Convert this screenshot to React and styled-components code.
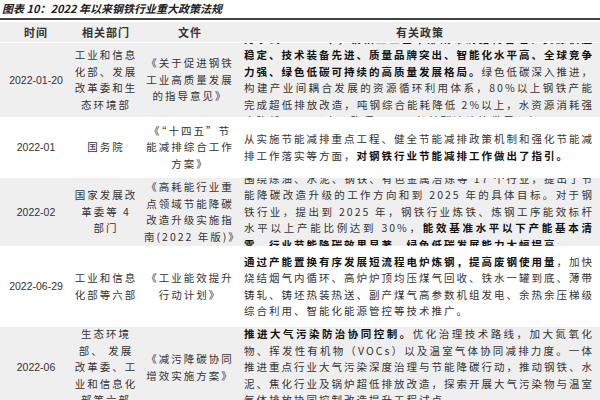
import React from "react";
import styled, { createGlobalStyle } from "styled-components";

const Global = createGlobalStyle`
  body { margin: 0; background: #fff; font-family: "Noto Sans CJK SC", "Liberation Sans", sans-serif; color: #222; }
`;

const Page = styled.div`
  width: 600px;
  height: 400px;
  overflow: hidden;
`;

const Title = styled.div`
  font-size: 11px;
  font-weight: 700;
  font-style: italic;
  padding: 0 2px;
  height: 18px;
  line-height: 16px;
  border-bottom: 2px solid #444;
  overflow: hidden;
`;

const Table = styled.div`
  display: grid;
  grid-template-columns: 72px 68px 100px 1fr;
  margin-top: 2px;
`;

const Cell = styled.div`
  background: ${(p) => (p.$shade ? "#efefef" : "#fff")};
  border-bottom: 1px solid #fff;
  display: flex;
  align-items: center;
  justify-content: ${(p) => (p.$left ? "flex-start" : "center")};
  text-align: ${(p) => (p.$left ? "justify" : "center")};
  font-size: ${(p) => (p.$head ? "11px" : "10.5px")};
  font-weight: ${(p) => (p.$head ? 700 : 400)};
  letter-spacing: ${(p) => (p.$date ? "0" : p.$head ? "1px" : "2px")};
  font-family: ${(p) => (p.$date ? '"Liberation Sans", sans-serif' : "inherit")};
  line-height: 16.5px;
  padding: ${(p) => (p.$left ? "0 6px 0 4px" : `0 ${p.$pad ?? 2}px`)};
  height: ${(p) => p.$h}px;
  box-sizing: border-box;
  color: #333;
  overflow: hidden;
`;

const Txt = styled.div`
  width: 100%;
  b { font-weight: 700; color: #111; }
`;

const rows = [
  {
    h: 75, shade: true, date: "2022-01-20", dept: "工业和信息化部、发展改革委和生态环境部",
    file: "《关于促进钢铁工业高质量发展的指导意见》",
    policy: (<><b>力争到 2025 年，钢铁工业基本形成布局结构合理、资源供应稳定、技术装备先进、质量品牌突出、智能化水平高、全球竞争力强、绿色低碳可持续的高质量发展格局。</b>绿色低碳深入推进，构建产业间耦合发展的资源循环利用体系，80%以上钢铁产能完成超低排放改造，吨钢综合能耗降低 2%以上，水资源消耗强度降低 10%以上，确保 2030 年前碳达峰等发展目标。</>),
  },
  {
    h: 60, date: "2022-01", dept: "国务院", file: "《“十四五”节能减排综合工作方案》",
    policy: (<>从实施节能减排重点工程、健全节能减排政策机制和强化节能减排工作落实等方面，<b>对钢铁行业节能减排工作做出了指引。</b></>),
  },
  {
    h: 69, shade: true, date: "2022-02", dept: "国家发展改革委等 4 部门",
    file: "《高耗能行业重点领域节能降碳改造升级实施指南(2022 年版)》",
    policy: (<>围绕炼油、水泥、钢铁、有色金属冶炼等 17 个行业，提出了节能降碳改造升级的工作方向和到 2025 年的具体目标。对于钢铁行业，提出到 2025 年，钢铁行业炼铁、炼钢工序能效标杆水平以上产能比例达到 30%，<b>能效基准水平以下产能基本清零，行业节能降碳效果显著，绿色低碳发展能力大幅提高。</b></>),
  },
  {
    h: 80, date: "2022-06-29", dept: "工业和信息化部等六部", file: "《工业能效提升行动计划》",
    policy: (<><b>通过产能置换有序发展短流程电炉炼钢，提高废钢使用量</b>，加快烧结烟气内循环、高炉炉顶均压煤气回收、铁水一罐到底、薄带铸轧、铸坯热装热送、副产煤气高参数机组发电、余热余压梯级综合利用、智能化能源管控等技术推广。</>),
  },
  {
    h: 82, shade: true, date: "2022-06", dept: "生态环境部、 发展改革委、工业和信息化部等六部",
    file: "《减污降碳协同增效实施方案》",
    policy: (<><b>推进大气污染防治协同控制。</b>优化治理技术路线，加大氮氧化物、挥发性有机物（VOCs）以及温室气体协同减排力度。一体推进重点行业大气污染深度治理与节能降碳行动，推动钢铁、水泥、焦化行业及锅炉超低排放改造，探索开展大气污染物与温室气体排放协同控制改造提升工程试点。</>),
  },
];

export default function App() {
  return (
    <Page>
      <Global />
      <Title>图表 10：2022 年以来钢铁行业重大政策法规</Title>
      <Table>
        {["时间", "相关部门", "文件", "有关政策"].map((t) => (
          <Cell key={t} $head $shade $h={21}>{t}</Cell>
        ))}
        {rows.map((r) => (
          <React.Fragment key={r.date + r.file}>
            <Cell $shade={r.shade} $date $h={r.h}>{r.date}</Cell>
            <Cell $shade={r.shade} $pad={1} $h={r.h}><Txt>{r.dept}</Txt></Cell>
            <Cell $shade={r.shade} $pad={4} $h={r.h}><Txt>{r.file}</Txt></Cell>
            <Cell $shade={r.shade} $left $h={r.h}><Txt>{r.policy}</Txt></Cell>
          </React.Fragment>
        ))}
      </Table>
    </Page>
  );
}
